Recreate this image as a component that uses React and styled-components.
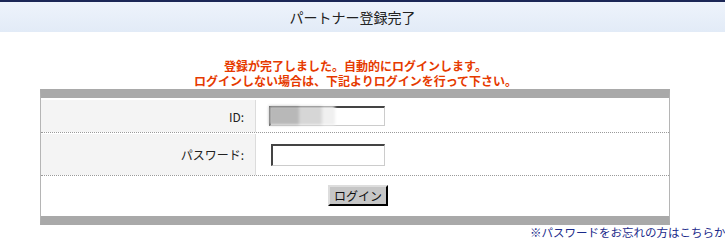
import styled, { createGlobalStyle } from "styled-components";

const Global = createGlobalStyle`
  html, body { margin: 0; padding: 0; background: #fff; overflow: hidden; }
  body { font-family: "MS PGothic", "Noto Sans CJK JP", sans-serif; font-size: 12px; }
`;

const Header = styled.div`
  border-top: 2px solid #1c2756;
  height: 30px;
  background: linear-gradient(#eef3fb, #e2ebf7);
  display: flex;
  justify-content: center;
  align-items: center;
  padding-right: 20px;
  font-size: 14px;
  color: #222;
`;

const Message = styled.div`
  margin-top: 26px;
  padding-right: 14px;
  text-align: center;
  color: #e63a00;
  font-weight: bold;
  font-size: 12px;
  line-height: 15px;
`;

const Panel = styled.div`
  margin: 1px 0 0 40px;
  width: 628px;
  border-left: 1px solid #b5b5b5;
  border-right: 1px solid #b5b5b5;
  border-top: 9px solid #a9a9a9;
  border-bottom: 9px solid #a9a9a9;
`;

const Row = styled.div`
  display: grid;
  grid-template-columns: 215px 1fr;
  height: ${p => p.h}px;
  border-top: ${p => (p.first ? "none" : "1px dotted #9a9a9a")};
  padding-top: ${p => (p.first ? 2 : 1)}px;
`;

const Label = styled.div`
  background: #f4f4f4;
  border-right: 1px solid #dcdcdc;
  display: flex;
  justify-content: flex-end;
  align-items: center;
  padding-right: 11px;
  color: #222;
`;

const Field = styled.div`
  display: flex;
  align-items: center;
  padding-left: ${p => p.pl}px;
`;

const Input = styled.div`
  position: relative;
  width: ${p => p.w}px;
  height: ${p => p.h}px;
  background: #fff;
  border-top: 2px solid #444;
  border-left: 2px solid #444;
  border-bottom: 1px solid #ccc;
  border-right: 1px solid #ccc;
  box-sizing: border-box;
`;

const Blurred = styled.span`
  position: absolute;
  left: -2px;
  top: -2px;
  width: 66px;
  height: 19px;
  background: linear-gradient(90deg, #b8b8b8 0 45%, #d6d6d6 45% 80%, #f0f0f0 80%);
  filter: blur(1.5px);
`;

const ButtonRow = styled.div`
  display: flex;
  justify-content: center;
  align-items: center;
  height: 38px;
  border-top: 1px dotted #9a9a9a;
  padding-bottom: 2px;
`;

const Button = styled.button`
  margin-left: 6px;
  width: 60px;
  height: 21px;
  font-family: inherit;
  font-size: 12px;
  color: #111;
  background: #c6c6c6;
  border: 2px outset #ddd;
  border-right-color: #333;
  border-bottom-color: #333;
  padding: 0;
`;

const Forgot = styled.div`
  padding-left: 530px;
  white-space: nowrap;
  color: #1a2a8a;
  font-size: 11.5px;
  line-height: 14px;
`;

export default function App() {
  return (
    <>
      <Global />
      <Header>パートナー登録完了</Header>
      <Message>
        登録が完了しました。自動的にログインします。
        <br />
        ログインしない場合は、下記よりログインを行って下さい。
      </Message>
      <Panel>
        <Row h={32} first>
          <Label>ID:</Label>
          <Field pl={13}>
            <Input w={116} h={20}>
              <Blurred />
            </Input>
          </Field>
        </Row>
        <Row h={41}>
          <Label>パスワード:</Label>
          <Field pl={15}>
            <Input w={114} h={22} />
          </Field>
        </Row>
        <ButtonRow>
          <Button>ログイン</Button>
        </ButtonRow>
      </Panel>
      <Forgot>※パスワードをお忘れの方はこちらから</Forgot>
    </>
  );
}
